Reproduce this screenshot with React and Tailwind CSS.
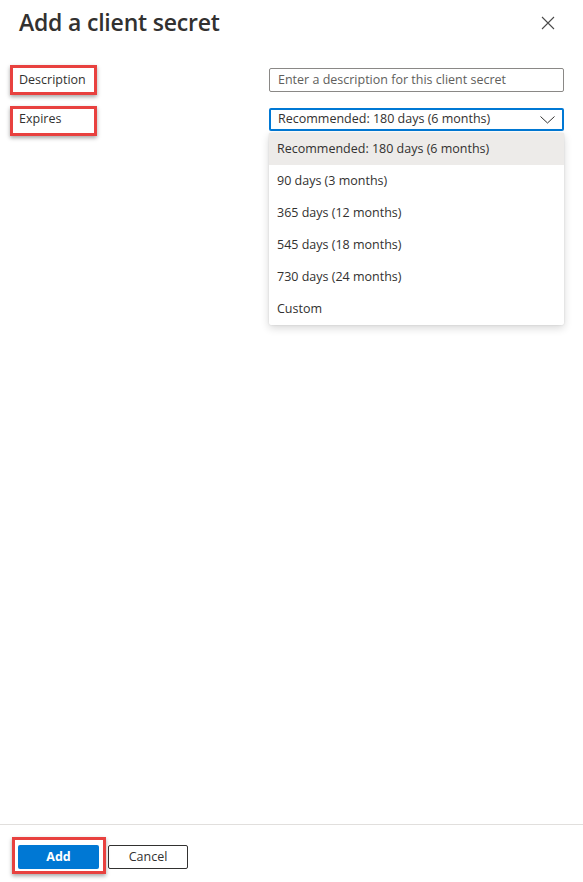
const options = [
  "Recommended: 180 days (6 months)",
  "90 days (3 months)",
  "365 days (12 months)",
  "545 days (18 months)",
  "730 days (24 months)",
  "Custom",
];

function Callout({ children }) {
  return (
    <div className="w-[87px] h-[30px] border-[3px] border-[#e8413f] shadow-[0_2px_4px_rgba(0,0,0,0.35)] pl-[6px] flex items-start pt-[3px]">
      {children}
    </div>
  );
}

export default function App() {
  return (
    <div className="w-[583px] h-[882px] bg-white flex flex-col text-[#323130] font-['Open_Sans','Noto_Sans',sans-serif]">
      <div className="flex-1">
        {/* header */}
        <div className="flex items-start justify-between pl-[19px] pr-[28px] pt-[6px]">
          <h1 className="text-[23px] leading-[32px] font-semibold tracking-[-0.2px]">Add a client secret</h1>
          <svg width="14" height="14" viewBox="0 0 14 14" className="mt-[10px]">
            <path d="M1 1 L13 13 M13 1 L1 13" stroke="#4a4a4a" strokeWidth="1.1" fill="none" />
          </svg>
        </div>

        {/* form */}
        <div className="mt-[27px] flex pl-[10px] pr-[19px]">
          <div className="w-[259px] flex flex-col gap-[11px]">
            <Callout>
              <span className="text-[12.5px] leading-[18px]">Description</span>
            </Callout>
            <Callout>
              <span className="text-[12.5px] leading-[18px] -mt-[2px]">Expires</span>
            </Callout>
          </div>
          <div className="flex-1 flex flex-col">
            <div className="mt-[3px] h-[24px] border border-[#8a8886] rounded-[2px] px-[8px] flex items-center">
              <span className="text-[12.5px] text-[#605e5c]">Enter a description for this client secret</span>
            </div>
            <div className="relative mt-[16px]">
              <div className="h-[23px] border-2 border-[#0078d4] rounded-[2px] pl-[7px] pr-[6px] flex items-center justify-between">
                <span className="text-[12.5px]">Recommended: 180 days (6 months)</span>
                <svg width="15" height="8" viewBox="0 0 15 8" className="mr-[1px]">
                  <path d="M0.5 0.5 L7.5 7 L14.5 0.5" stroke="#323130" strokeWidth="1" fill="none" />
                </svg>
              </div>
              <div className="absolute left-0 right-0 top-[25px] bg-white rounded-[2px] shadow-[0_3px_8px_rgba(0,0,0,0.16),0_0_2px_rgba(0,0,0,0.12)]">
                {options.map((o, i) => (
                  <div
                    key={o}
                    className={`h-[32px] px-[8px] flex items-center text-[12.5px] ${i === 0 ? "bg-[#edebe9]" : ""}`}
                  >
                    {o}
                  </div>
                ))}
              </div>
            </div>
          </div>
        </div>
      </div>

      {/* footer */}
      <div className="border-t border-[#e1dfdd] h-[58px] pl-[12px] pt-[12px] flex items-start gap-[2px]">
        <div className="w-[94px] h-[37px] border-[3px] border-[#e8413f] shadow-[0_2px_4px_rgba(0,0,0,0.35)] pl-[3px] pt-[5px]">
          <button className="w-[81px] h-[24px] bg-[#0078d4] rounded-[2px] text-white text-[12.5px] font-bold flex items-center justify-center">
            Add
          </button>
        </div>
        <button className="mt-[8px] w-[80px] h-[24px] border border-[#323130] rounded-[2px] text-[12.5px] flex items-center justify-center">
          Cancel
        </button>
      </div>
    </div>
  );
}
